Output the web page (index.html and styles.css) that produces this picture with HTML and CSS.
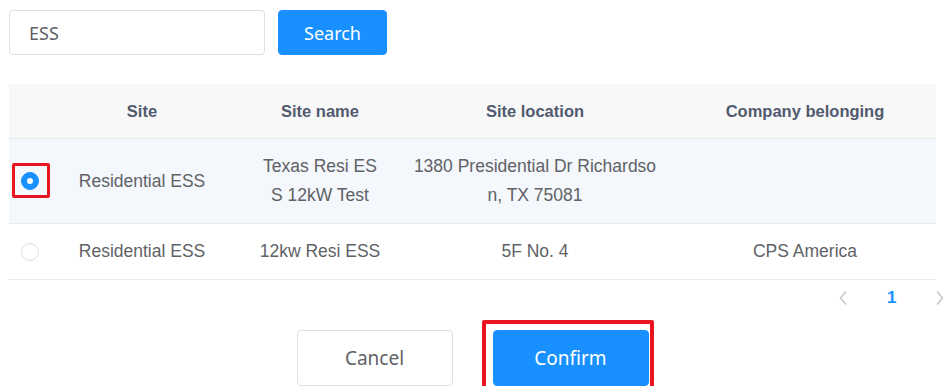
FILE: index.html
```html
<!DOCTYPE html>
<html lang="en">
<head>
<meta charset="utf-8">
<title>Site select</title>
<link rel="stylesheet" href="styles.css">
</head>
<body>
<div class="page">
  <div class="search-row">
    <div class="input">ESS</div>
    <button class="btn btn-primary btn-search">Search</button>
  </div>

  <table class="grid">
    <colgroup>
      <col class="c0"><col class="c1"><col class="c2"><col class="c3"><col class="c4">
    </colgroup>
    <thead>
      <tr>
        <th></th>
        <th>Site</th>
        <th>Site name</th>
        <th>Site location</th>
        <th>Company belonging</th>
      </tr>
    </thead>
    <tbody>
      <tr class="row-checked">
        <td class="radio-cell"><span class="radio-wrap"><span class="radio checked"></span><span class="mark mark-radio"></span></span></td>
        <td>Residential ESS</td>
        <td>Texas Resi ESS 12kW Test</td>
        <td>1380 Presidential Dr Richardson, TX 75081</td>
        <td></td>
      </tr>
      <tr>
        <td class="radio-cell"><span class="radio-wrap"><span class="radio"></span></span></td>
        <td>Residential ESS</td>
        <td>12kw Resi ESS</td>
        <td>5F No. 4</td>
        <td>CPS America</td>
      </tr>
    </tbody>
  </table>

  <div class="pager">
    <span class="pg-arrow"><svg width="8" height="14" viewBox="0 0 8 14"><path d="M6.5 1 L1.5 7 L6.5 13" fill="none" stroke="#c5c8ce" stroke-width="1.6" stroke-linecap="round" stroke-linejoin="round"/></svg></span>
    <span class="pg-num">1</span>
    <span class="pg-arrow"><svg width="8" height="14" viewBox="0 0 8 14"><path d="M1.5 1 L6.5 7 L1.5 13" fill="none" stroke="#c5c8ce" stroke-width="1.6" stroke-linecap="round" stroke-linejoin="round"/></svg></span>
  </div>

  <div class="footer">
    <button class="btn btn-default btn-foot">Cancel</button>
    <span class="confirm-wrap">
      <button class="btn btn-primary btn-foot">Confirm</button>
      <span class="mark mark-confirm"></span>
    </span>
  </div>
</div>
</body>
</html>
```

FILE: styles.css
```css
html, body {
  margin: 0;
  padding: 0;
  background: #ffffff;
  overflow: hidden;
}

.page {
  width: 927px;
  padding: 10px 0 0 9px;
  font-family: "Liberation Sans", Arial, sans-serif;
}

.search-row {
  display: flex;
  gap: 13px;
  height: 45px;
}

.input {
  box-sizing: border-box;
  width: 256px;
  height: 45px;
  border: 1px solid #dcdfe6;
  border-radius: 4px;
  padding: 0 19px;
  display: flex;
  align-items: center;
  font-family: "Noto Sans", "Open Sans", sans-serif;
  font-size: 18px;
  color: #606266;
}

.btn {
  box-sizing: border-box;
  border-radius: 4px;
  font-family: "Noto Sans", "Open Sans", sans-serif;
  cursor: pointer;
  padding: 0;
}

.btn-primary {
  background: #1890ff;
  border: 1px solid #1890ff;
  color: #ffffff;
}

.btn-default {
  background: #ffffff;
  border: 1px solid #dcdfe6;
  color: #606266;
}

.btn-search {
  width: 109px;
  height: 45px;
  font-size: 18px;
}

.grid {
  margin-top: 29px;
  width: 927px;
  table-layout: fixed;
  border-collapse: collapse;
  border-spacing: 0;
}

.c0 { width: 31px; }
.c1 { width: 204px; }
.c2 { width: 152px; }
.c3 { width: 278px; }
.c4 { width: 262px; }

.grid th {
  background: #f8f8f9;
  color: #515a6e;
  font-weight: bold;
  font-size: 16.5px;
  line-height: 30px;
  padding: 12px 14px;
  text-align: center;
  border-bottom: 1px solid #e8eaec;
}

.grid td {
  color: #606266;
  font-size: 17.5px;
  line-height: 29px;
  padding: 13px 14px;
  text-align: center;
  vertical-align: middle;
  word-break: break-all;
  border-bottom: 1px solid #e8eaec;
}

.grid .row-checked td {
  background: #f4f7fb;
}

.grid td.radio-cell {
  padding: 0 0 0 12px;
  text-align: left;
}

.radio-wrap {
  position: relative;
  display: block;
  width: 18px;
  height: 18px;
}

.radio {
  box-sizing: border-box;
  display: block;
  width: 18px;
  height: 18px;
  border-radius: 50%;
  border: 1px solid #dcdfe6;
  background: #ffffff;
}

.radio.checked {
  border-color: #1890ff;
  background: #1890ff;
  position: relative;
}

.radio.checked::after {
  content: "";
  position: absolute;
  left: 50%;
  top: 50%;
  width: 6px;
  height: 6px;
  margin: -3px 0 0 -3px;
  border-radius: 50%;
  background: #ffffff;
}

.mark {
  position: absolute;
  box-sizing: border-box;
  border: 3.5px solid #e8141f;
  border-radius: 2px;
}

.mark-radio {
  left: -9px;
  top: -9px;
  width: 38px;
  height: 35px;
}

.pager {
  display: flex;
  justify-content: flex-end;
  align-items: center;
  gap: 40px;
  height: 36px;
  margin-right: -8px;
}

.pg-arrow {
  display: flex;
  width: 8px;
  height: 14px;
}

.pg-num {
  color: #1890ff;
  font-weight: bold;
  font-size: 17px;
  width: 9px;
  text-align: center;
}

.footer {
  margin-top: 14px;
  display: flex;
  justify-content: center;
  gap: 40px;
}

.btn-foot {
  width: 156px;
  height: 56px;
  font-size: 19px;
}

.confirm-wrap {
  position: relative;
  display: block;
  height: 56px;
}

.confirm-wrap .btn {
  display: block;
}

.mark-confirm {
  left: -11px;
  top: -10px;
  width: 172px;
  height: 72px;
  border-width: 4px;
}
```
